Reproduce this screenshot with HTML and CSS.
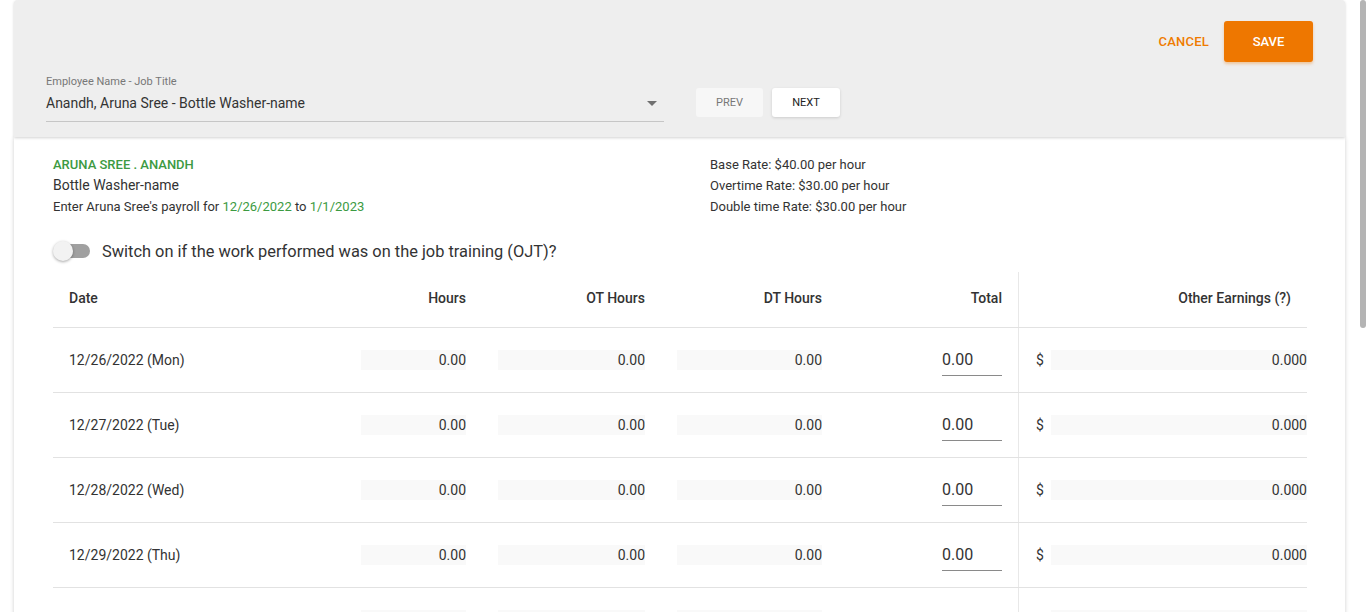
FILE: index.html
```html
<!DOCTYPE html>
<html lang="en">
<head>
<meta charset="utf-8">
<title>Payroll entry</title>
<link rel="stylesheet" href="styles.css">
</head>
<body>
<div class="scroll-thumb" aria-hidden="true"></div>
<div class="page">
  <header class="toolbar">
    <div class="actions">
      <button class="btn-text">CANCEL</button>
      <button class="btn-save">SAVE</button>
    </div>
    <div class="picker-row">
      <div class="select-field">
        <div class="select-label">Employee Name - Job Title</div>
        <div class="select-value">
          <span>Anandh, Aruna Sree - Bottle Washer-name</span>
          <span class="caret"></span>
        </div>
      </div>
      <button class="btn-nav btn-prev">PREV</button>
      <button class="btn-nav btn-next">NEXT</button>
    </div>
  </header>

  <main class="sheet">
    <section class="info">
      <div class="info-left">
        <div class="emp-name">ARUNA SREE . ANANDH</div>
        <div class="emp-job">Bottle Washer-name</div>
        <div class="emp-period">Enter Aruna Sree's payroll for <span class="green">12/26/2022</span> to <span class="green">1/1/2023</span></div>
      </div>
      <div class="info-right">
        <div>Base Rate: $40.00 per hour</div>
        <div>Overtime Rate: $30.00 per hour</div>
        <div>Double time Rate: $30.00 per hour</div>
      </div>
    </section>

    <div class="ojt">
      <span class="switch"><span class="track"></span><span class="thumb"></span></span>
      <span class="ojt-text">Switch on if the work performed was on the job training (OJT)?</span>
    </div>

    <div class="grid">
      <div class="row head">
        <div class="c c-date">Date</div>
        <div class="c c-num">Hours</div>
        <div class="c c-num">OT Hours</div>
        <div class="c c-num">DT Hours</div>
        <div class="c c-total">Total</div>
        <div class="c c-other">Other Earnings (?)</div>
      </div>

      <div class="row">
        <div class="c c-date">12/26/2022 (Mon)</div>
        <div class="c c-num"><span class="inp w-h">0.00</span></div>
        <div class="c c-num"><span class="inp w-ot">0.00</span></div>
        <div class="c c-num"><span class="inp w-dt">0.00</span></div>
        <div class="c c-total"><span class="tot">0.00</span></div>
        <div class="c c-other"><span class="dollar">$</span><span class="inp w-oe">0.000</span></div>
      </div>
      <div class="row">
        <div class="c c-date">12/27/2022 (Tue)</div>
        <div class="c c-num"><span class="inp w-h">0.00</span></div>
        <div class="c c-num"><span class="inp w-ot">0.00</span></div>
        <div class="c c-num"><span class="inp w-dt">0.00</span></div>
        <div class="c c-total"><span class="tot">0.00</span></div>
        <div class="c c-other"><span class="dollar">$</span><span class="inp w-oe">0.000</span></div>
      </div>
      <div class="row">
        <div class="c c-date">12/28/2022 (Wed)</div>
        <div class="c c-num"><span class="inp w-h">0.00</span></div>
        <div class="c c-num"><span class="inp w-ot">0.00</span></div>
        <div class="c c-num"><span class="inp w-dt">0.00</span></div>
        <div class="c c-total"><span class="tot">0.00</span></div>
        <div class="c c-other"><span class="dollar">$</span><span class="inp w-oe">0.000</span></div>
      </div>
      <div class="row">
        <div class="c c-date">12/29/2022 (Thu)</div>
        <div class="c c-num"><span class="inp w-h">0.00</span></div>
        <div class="c c-num"><span class="inp w-ot">0.00</span></div>
        <div class="c c-num"><span class="inp w-dt">0.00</span></div>
        <div class="c c-total"><span class="tot">0.00</span></div>
        <div class="c c-other"><span class="dollar">$</span><span class="inp w-oe">0.000</span></div>
      </div>
      <div class="row">
        <div class="c c-date">12/30/2022 (Fri)</div>
        <div class="c c-num"><span class="inp w-h">0.00</span></div>
        <div class="c c-num"><span class="inp w-ot">0.00</span></div>
        <div class="c c-num"><span class="inp w-dt">0.00</span></div>
        <div class="c c-total"><span class="tot">0.00</span></div>
        <div class="c c-other"><span class="dollar">$</span><span class="inp w-oe">0.000</span></div>
      </div>
      <div class="row">
        <div class="c c-date">12/31/2022 (Sat)</div>
        <div class="c c-num"><span class="inp w-h">0.00</span></div>
        <div class="c c-num"><span class="inp w-ot">0.00</span></div>
        <div class="c c-num"><span class="inp w-dt">0.00</span></div>
        <div class="c c-total"><span class="tot">0.00</span></div>
        <div class="c c-other"><span class="dollar">$</span><span class="inp w-oe">0.000</span></div>
      </div>
      <div class="row">
        <div class="c c-date">1/1/2023 (Sun)</div>
        <div class="c c-num"><span class="inp w-h">0.00</span></div>
        <div class="c c-num"><span class="inp w-ot">0.00</span></div>
        <div class="c c-num"><span class="inp w-dt">0.00</span></div>
        <div class="c c-total"><span class="tot">0.00</span></div>
        <div class="c c-other"><span class="dollar">$</span><span class="inp w-oe">0.000</span></div>
      </div>
      <div class="row foot">
        <div class="c c-date">Total</div>
        <div class="c c-num">0.00</div>
        <div class="c c-num">0.00</div>
        <div class="c c-num">0.00</div>
        <div class="c c-total">0.00</div>
        <div class="c c-other">$0.000</div>
      </div>
    </div>
  </main>
</div>
</body>
</html>
```

FILE: styles.css
```css
* { box-sizing: border-box; }

html { background: #fff; }

body {
  margin: 0;
  font-family: Roboto, "Liberation Sans", Arial, sans-serif;
  color: #333;
  background: #fff;
}

/* overlay imitation of the thin page scrollbar */
.scroll-thumb {
  position: fixed;
  top: 0;
  right: 0;
  width: 6px;
  height: 328px;
  background: #b4b4b4;
  border-radius: 3px;
  z-index: 10;
}

.page {
  margin: 0 21px 0 14px;
}

button {
  font-family: inherit;
  cursor: pointer;
  border: 0;
}

/* ---------- toolbar ---------- */
.toolbar {
  height: 137px;
  background: #eeeeee;
  border-radius: 4px 4px 0 0;
  box-shadow: 0 1px 3px rgba(0,0,0,0.18);
  padding: 21px 32px 0 32px;
  display: flex;
  flex-direction: column;
  position: relative;
  z-index: 1;
}

.actions {
  display: flex;
  justify-content: flex-end;
  align-items: center;
  height: 40px;
  gap: 15px;
}

.btn-text {
  background: transparent;
  color: #ef7b00;
  font-size: 13px;
  font-weight: 500;
  letter-spacing: 0.2px;
  padding: 0;
}

.btn-save {
  width: 89px;
  height: 41px;
  background: #ee7700;
  color: #fff;
  font-size: 13px;
  font-weight: 500;
  border-radius: 3px;
  box-shadow: 0 2px 3px rgba(238,119,0,0.35);
}

.picker-row {
  display: flex;
  align-items: flex-start;
  margin-top: 14px;
}

.select-field {
  width: 618px;
  border-bottom: 1px solid #c6c6c6;
  padding-bottom: 7px;
}

.select-label {
  font-size: 11px;
  line-height: 13px;
  color: #777;
}

.select-value {
  margin-top: 5px;
  display: flex;
  justify-content: space-between;
  align-items: center;
  font-size: 14px;
  line-height: 21px;
  color: #333;
}

.caret {
  width: 0;
  height: 0;
  border-left: 5px solid transparent;
  border-right: 5px solid transparent;
  border-top: 5px solid #707070;
  margin-right: 7px;
}

.btn-nav {
  height: 29px;
  margin-top: 13px;
  font-size: 11px;
  border-radius: 3px;
}

.btn-prev {
  width: 67px;
  margin-left: 32px;
  background: #f7f7f7;
  color: #777;
}

.btn-next {
  width: 68px;
  margin-left: 9px;
  background: #fff;
  color: #222;
  box-shadow: 0 1px 3px rgba(0,0,0,0.14);
}

/* ---------- sheet ---------- */
.sheet {
  background: #fff;
  box-shadow: 0 1px 4px rgba(0,0,0,0.2);
  padding: 17px 38px 296px 39px;
}

.info {
  display: flex;
}

.info-left { width: 657px; }

.info-left div,
.info-right div {
  line-height: 21px;
}

.emp-name {
  font-size: 13px;
  font-weight: 500;
  color: #3c9a42;
}

.emp-job { font-size: 14px; }

.emp-period { font-size: 13px; }

.green { color: #3c9a42; }

.info-right { font-size: 13px; }

.ojt {
  display: flex;
  align-items: center;
  margin-top: 22px;
  height: 24px;
}

.switch {
  position: relative;
  width: 37px;
  height: 20px;
  display: inline-block;
}

.track {
  position: absolute;
  left: 5px;
  top: 3px;
  width: 32px;
  height: 14px;
  border-radius: 7px;
  background: #a0a0a0;
}

.thumb {
  position: absolute;
  left: 0;
  top: 0;
  width: 20px;
  height: 20px;
  border-radius: 50%;
  background: #f2f2f2;
  box-shadow: 0 1px 3px rgba(0,0,0,0.35);
}

.ojt-text {
  margin-left: 12px;
  font-size: 16.4px;
  color: #333;
}

/* ---------- grid ---------- */
.grid {
  margin-top: 9px;
}

.row {
  display: grid;
  grid-template-columns: 292px 121px 179px 177px 196px 289px;
  height: 65px;
  border-bottom: 1px solid #e2e2e2;
  align-items: stretch;
}

.row.head {
  height: 56px;
  font-size: 14px;
  font-weight: 500;
  color: #333;
}

.row.head .c { padding-bottom: 4px; }

.c {
  display: flex;
  align-items: center;
  font-size: 14px;
}

.c-date { padding-left: 16px; }

.c-num { justify-content: flex-end; }

.c-total {
  justify-content: flex-end;
  padding-right: 16px;
}

.c-other {
  border-left: 1px solid #e8e8e8;
  justify-content: flex-end;
}

.head .c-other { padding-right: 16px; }

.inp {
  display: block;
  height: 20px;
  line-height: 20px;
  background: #f9f9f9;
  text-align: right;
  font-size: 14px;
  color: #333;
}

.w-h { width: 105px; }
.w-ot { width: 147px; }
.w-dt { width: 145px; }
.w-oe { width: 256px; }

.tot {
  display: block;
  width: 60px;
  font-size: 16px;
  line-height: 22px;
  padding-bottom: 4px;
  margin-top: 4px;
  border-bottom: 1px solid #8a8a8a;
  color: #333;
}

.dollar {
  margin-right: 9px;
  font-size: 14px;
}

.c-other .dollar { margin-left: 17px; margin-right: auto; }

.foot .c { font-weight: 500; }
```
